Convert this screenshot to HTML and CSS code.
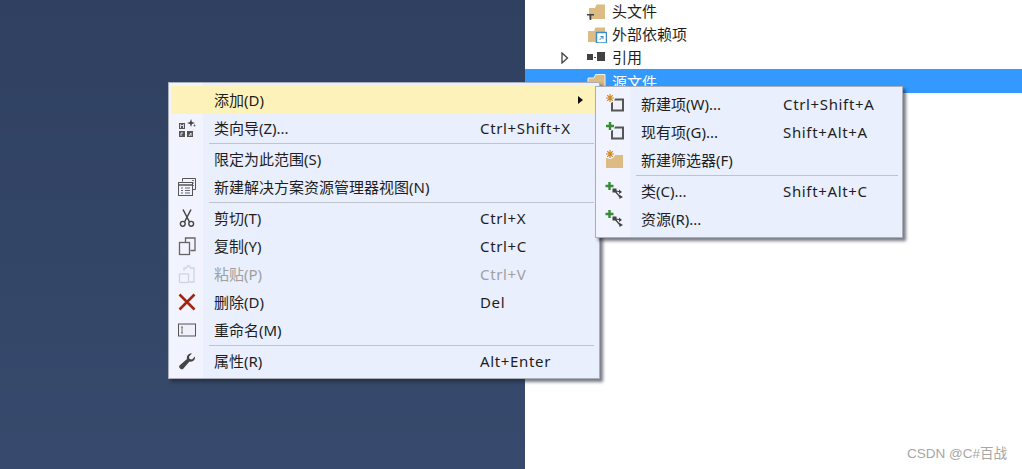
FILE: index.html
```html
<!DOCTYPE html>
<html lang="zh-CN">
<head>
  <meta charset="UTF-8" />
  <title>解决方案资源管理器</title>
  <link rel="stylesheet" href="styles.css">
</head>
<body>
  <div class="editor"></div>

  <div class="explorer">
    <div class="tree-row">
      <svg class="tree-icon" viewBox="0 0 20 16"><path d="M2 4h6l1.500-3.500h8.500V15H2z" fill="#dcbb85"/><path d="M0 10h7v1.500H4.300V16H2.700v-4.500H0z" fill="#424242"/></svg>
      <span>头文件</span>
    </div>
    <div class="tree-row">
      <svg class="tree-icon" viewBox="0 0 20 16"><path d="M1 4h6l1.500-3.500H18V15H1z" fill="#dcbb85"/><rect x="9.500" y="5.500" width="10" height="10.500" fill="#fff" stroke="#3c8cc8" stroke-width="1.500"/><path d="M12.500 13l3.500-3.500M13.500 9.500H16V12" fill="none" stroke="#3c8cc8"/></svg>
      <span>外部依赖项</span>
    </div>
    <div class="tree-row">
      <svg class="tree-arrow" viewBox="0 0 8 12"><path d="M1 1l5.500 5-5.500 5z" fill="#fff" stroke="#424242" stroke-width="1.300"/></svg>
      <svg class="tree-icon" viewBox="0 0 20 16"><rect x="0" y="4" width="6" height="6" fill="#424242"/><rect x="10" y="2" width="8" height="9" fill="#424242"/><path d="M7 7.500h2" stroke="#424242"/></svg>
      <span>引用</span>
    </div>
    <div class="tree-row selected">
      <svg class="tree-icon" viewBox="0 0 20 16"><path d="M1 4h6l1.500-3.500H18V15H1z" fill="#dcbb85" stroke="#eee"/></svg>
      <span>源文件</span>
    </div>
  </div>

  <div class="menu main-menu">
    <div class="item active">
      <span class="ico"></span><span class="label">添加(D)</span><span class="arrow"></span>
    </div>
    <div class="item">
      <span class="ico">
        <svg viewBox="0 0 18 18"><rect x="1" y="4" width="6" height="6" fill="#555"/><rect x="1" y="12" width="6" height="6" fill="#555"/><rect x="9" y="12" width="6" height="6" fill="#555"/><path d="M13 0l1 3 3 1-3 1-1 3-1-3-3-1 3-1z" fill="#444"/><path d="M16.500 5l.5 1 1 .5-1 .5-.5 1-.5-1-1-.5 1-.5z" fill="#666"/><path d="M2.500 9V5.500L4 7l1.500-1.500V9M3 17v-3h2M11 17l2-3v3" fill="none" stroke="#fff" stroke-width=".8"/></svg>
      </span>
      <span class="label">类向导(Z)...</span><span class="keys">Ctrl+Shift+X</span>
    </div>
    <div class="sep"></div>
    <div class="item">
      <span class="ico"></span><span class="label">限定为此范围(S)</span>
    </div>
    <div class="item">
      <span class="ico">
        <svg viewBox="0 0 18 18"><path d="M4.500 3.500V.5h13v11h-3" fill="none" stroke="#555"/><path d="M14 2.500h2M14 5h2M14 7.500h2" stroke="#777"/><rect x=".5" y="4.500" width="14" height="13" fill="#f1f4fe" stroke="#555"/><path d="M.5 7h14" stroke="#555" stroke-width="1.500"/><path d="M3 10h2M7 10h5M3 12.500h2M7 12.500h5M3 15h2M7 15h5" stroke="#666"/></svg>
      </span>
      <span class="label">新建解决方案资源管理器视图(N)</span>
    </div>
    <div class="sep"></div>
    <div class="item">
      <span class="ico">
        <svg viewBox="0 0 18 18"><path d="M5 .5l6.500 12.500M13 .5L6.500 13" fill="none" stroke="#444" stroke-width="1.500"/><circle cx="4.800" cy="14.800" r="2.400" fill="none" stroke="#444" stroke-width="1.400"/><circle cx="13.200" cy="14.800" r="2.400" fill="none" stroke="#444" stroke-width="1.400"/></svg>
      </span>
      <span class="label">剪切(T)</span><span class="keys">Ctrl+X</span>
    </div>
    <div class="item">
      <span class="ico">
        <svg viewBox="0 0 18 18"><path d="M7.500 5V1h9.500v12.500h-4.500" fill="none" stroke="#666" stroke-width="1.300"/><rect x="1.500" y="5.500" width="10" height="12" fill="none" stroke="#666" stroke-width="1.300"/></svg>
      </span>
      <span class="label">复制(Y)</span><span class="keys">Ctrl+C</span>
    </div>
    <div class="item disabled">
      <span class="ico">
        <svg viewBox="0 0 18 18"><path d="M6 6V3h2.500l1-2h2l1 2H16v14h-4.500" fill="none" stroke="#d0d4dc" stroke-width="1.300"/><rect x="1.500" y="9" width="9" height="8.500" fill="none" stroke="#d0d4dc" stroke-width="1.300"/></svg>
      </span>
      <span class="label">粘贴(P)</span><span class="keys">Ctrl+V</span>
    </div>
    <div class="item">
      <span class="ico">
        <svg viewBox="0 0 18 18"><path d="M1.500 1.500l15 15M16.500 1.500l-15 15" stroke="#a1260d" stroke-width="2.600"/></svg>
      </span>
      <span class="label">删除(D)</span><span class="keys">Del</span>
    </div>
    <div class="item">
      <span class="ico">
        <svg viewBox="0 0 18 14"><rect x=".5" y="1" width="17" height="12" fill="#eef0fa" stroke="#555"/><path d="M3 4h2M4 4v6M3 10h2" stroke="#555" stroke-width=".8"/></svg>
      </span>
      <span class="label">重命名(M)</span>
    </div>
    <div class="sep"></div>
    <div class="item">
      <span class="ico">
        <svg viewBox="0 0 18 18"><path d="M1.500 13.500L9 7c-.8-3 1.500-6 5-5.500L11 4.500l.5 2.500 2.500.5L17 4.500c.5 3.500-2.500 6-5.500 5L5 17c-1.500 1.300-5-1.500-3.500-3.500z" fill="#444"/></svg>
      </span>
      <span class="label">属性(R)</span><span class="keys">Alt+Enter</span>
    </div>
  </div>

  <div class="menu sub-menu">
    <div class="item">
      <span class="ico">
        <svg viewBox="0 0 20 18"><rect x="8" y="4.500" width="11" height="11" fill="#eef0fa" stroke="#555" stroke-width="2"/><circle cx="6" cy="3" r="5" fill="#f1f4fe"/><path d="M6 -1v8M2 3h8M3.200 .2l5.600 5.600M8.800 .2L3.200 5.800" stroke="#d08a20" stroke-width="1.200"/></svg>
      </span>
      <span class="label">新建项(W)...</span><span class="keys">Ctrl+Shift+A</span>
    </div>
    <div class="item">
      <span class="ico">
        <svg viewBox="0 0 20 18"><rect x="8" y="4.500" width="11" height="11" fill="#eef0fa" stroke="#555" stroke-width="2"/><circle cx="6" cy="3" r="5" fill="#f1f4fe"/><path d="M6 -1v8M2 3h8" stroke="#388a34" stroke-width="2.400"/></svg>
      </span>
      <span class="label">现有项(G)...</span><span class="keys">Shift+Alt+A</span>
    </div>
    <div class="item">
      <span class="ico">
        <svg viewBox="0 0 20 18"><path d="M2 7h6l1.500-3H19v13H2z" fill="#dcbb85"/><circle cx="6" cy="3" r="5" fill="#f1f4fe"/><path d="M6 -1v8M2 3h8M3.200 .2l5.600 5.600M8.800 .2L3.200 5.800" stroke="#d08a20" stroke-width="1.200"/></svg>
      </span>
      <span class="label">新建筛选器(F)</span>
    </div>
    <div class="sep"></div>
    <div class="item">
      <span class="ico">
        <svg viewBox="0 0 20 18"><path d="M5.500 0v8M1.500 4h8" stroke="#388a34" stroke-width="2.400"/><path d="M10 8.500l7 1.500M11 9l5 6" stroke="#444" stroke-width="1.200"/><rect x="8.500" y="6.500" width="4" height="4" fill="#444"/><path d="M15 7.500l3 2.500-3 2zM15 12.500l4 2.500-3.500 2z" fill="#444"/></svg>
      </span>
      <span class="label">类(C)...</span><span class="keys">Shift+Alt+C</span>
    </div>
    <div class="item">
      <span class="ico">
        <svg viewBox="0 0 20 18"><path d="M5.500 0v8M1.500 4h8" stroke="#388a34" stroke-width="2.400"/><path d="M10 8.500l7 1.500M11 9l5 6" stroke="#444" stroke-width="1.200"/><rect x="8.500" y="6.500" width="4" height="4" fill="#444"/><path d="M15 7.500l3 2.500-3 2zM15 12.500l4 2.500-3.500 2z" fill="#444"/></svg>
      </span>
      <span class="label">资源(R)...</span>
    </div>
  </div>

  <div class="watermark">CSDN @C#百战</div>
</body>
</html>
```

FILE: styles.css
```css
body {
  margin: 0;
  height: 469px;
  overflow: hidden;
  display: flex;
  font-family: "Noto Sans", "Noto Sans CJK SC", sans-serif;
  font-size: 15px;
  color: #1e1e1e;
  background: #fff;
}

.editor {
  width: 525px;
  background: linear-gradient(to bottom, #2f4060, #374a6d);
}

.explorer {
  flex: 1;
  margin-top: -1px;
}

.tree-row {
  height: 23px;
  display: flex;
  align-items: center;
  padding-left: 62px;
  gap: 5px;
  position: relative;
}

.tree-row.selected {
  background: #3399ff;
  color: #fff;
  height: 24px;
  margin-top: 1px;
}

.tree-icon {
  width: 20px;
  height: 16px;
  margin-top: 2px;
}

.tree-arrow {
  position: absolute;
  left: 36px;
  top: 7px;
  width: 8px;
  height: 12px;
}

.menu {
  position: absolute;
  box-sizing: border-box;
  background: linear-gradient(to right, #f1f4fe var(--gutter), #e9effd var(--gutter));
  border: 1px solid #a9aeb9;
  box-shadow: 3px 3px 3px rgba(30, 35, 50, 0.6);
  padding: 3px 2px 2px;
}

.main-menu {
  --gutter: 34px;
  left: 168px;
  top: 82px;
  width: 432px;
  height: 297px;
}

.sub-menu {
  --gutter: 34px;
  left: 595px;
  top: 86px;
  width: 308px;
  height: 152px;
}

.item {
  height: 28px;
  display: flex;
  align-items: center;
  position: relative;
}

.item.active {
  background: #fdf2ba;
}

.item.disabled {
  color: #a0a0a0;
}

.ico {
  width: 31px;
  margin-right: 12px;
  flex: none;
  display: flex;
  justify-content: center;
}

.ico svg {
  width: 18px;
  height: 18px;
  overflow: visible;
}

.sub-menu .ico svg {
  width: 20px;
}

.label {
  flex: none;
  width: 266px;
  white-space: nowrap;
  position: relative;
  top: -1px;
}

.sub-menu .label {
  width: 142px;
}

.keys {
  white-space: nowrap;
  letter-spacing: 0.65px;
}

.arrow {
  position: absolute;
  right: 14px;
  top: 10px;
  border-left: 5px solid #111;
  border-top: 4px solid transparent;
  border-bottom: 4px solid transparent;
}

.sep {
  height: 1px;
  margin: 1px 3px 1px 38px;
  background: #bfc3cc;
}

.sub-menu .sep {
  margin-right: 2px;
}

.watermark {
  position: absolute;
  right: 15px;
  bottom: 7px;
  font-family: "Liberation Sans", "Noto Sans CJK SC", sans-serif;
  font-size: 13.5px;
  color: #a6a6a6;
}
```
